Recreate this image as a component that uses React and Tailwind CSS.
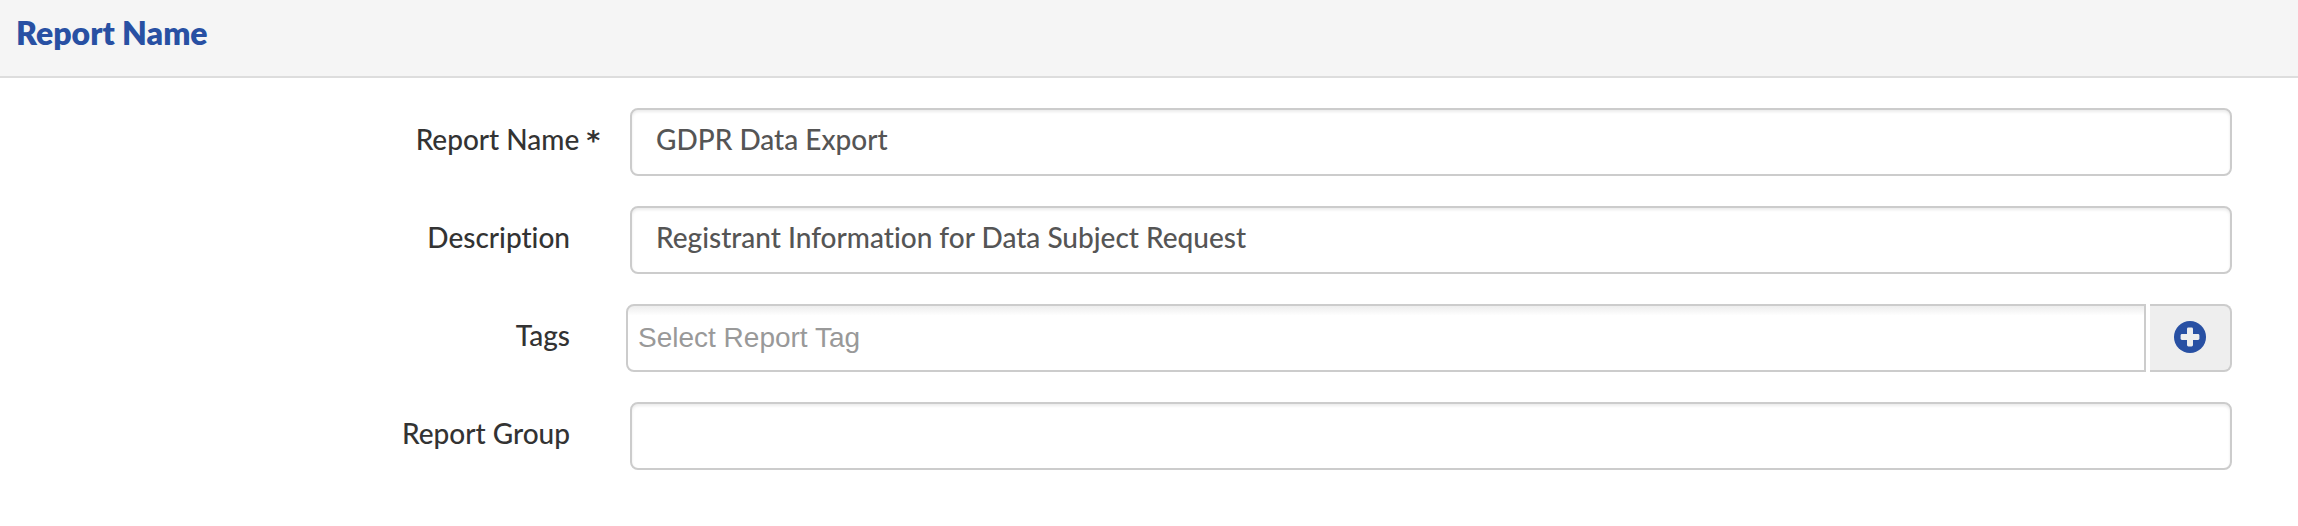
import { useState } from 'react';

const labelStyle = 'w-[600px] shrink-0 pb-1.5 text-right text-[28px] leading-[34px] font-medium text-[#333333]';
const inputStyle =
  'h-[68px] min-w-0 flex-1 rounded-lg border-2 border-[#cccccc] bg-white px-6 pb-1.5 text-[28px] font-medium text-[#555555] shadow-[inset_0_2px_3px_rgba(0,0,0,0.08)] outline-none focus:border-[#2850a3]';

const PlusIcon = () => (
  <svg viewBox="0 0 32 32" className="h-8 w-8" aria-hidden="true">
    <circle cx="16" cy="16" r="16" fill="#2850a3" />
    <rect x="6.6" y="13" width="18.8" height="6" rx="1.4" fill="#eeeeee" />
    <rect x="13" y="6.6" width="6" height="18.8" rx="1.4" fill="#eeeeee" />
  </svg>
);

const FormRow = ({ id, label, required, children }) => (
  <div className="flex items-center">
    <label htmlFor={id} className={required ? labelStyle : `${labelStyle} pr-[30px]`}>
      {label}
      {required && (
        <>
          {' '}
          <span className="font-['DejaVu_Sans',sans-serif] text-[26px] leading-none font-bold">*</span>
        </>
      )}
    </label>
    {children}
  </div>
);

const App = () => {
  const [form, setForm] = useState({
    name: 'GDPR Data Export',
    description: 'Registrant Information for Data Subject Request',
    tags: '',
    group: '',
  });

  const handleChange = (e) => {
    const { name, value } = e.target;
    setForm((prev) => ({ ...prev, [name]: value }));
  };

  return (
    <div className="bg-white font-[Lato,sans-serif] [font-variant-ligatures:none]">
      <header className="border-b-2 border-[#dddddd] bg-[#f5f5f5] px-4 pt-[13px] pb-[23px]">
        <h1 className="text-[32px] leading-[40px] font-extrabold text-[#2850a3]">Report Name</h1>
      </header>

      <form onSubmit={(e) => e.preventDefault()} className="space-y-[30px] pt-[30px] pr-[66px] pb-14">
        <FormRow id="name" label="Report Name" required>
          <input
            id="name"
            type="text"
            name="name"
            value={form.name}
            onChange={handleChange}
            required
            className={`${inputStyle} ml-[30px]`}
          />
        </FormRow>

        <FormRow id="description" label="Description">
          <input
            id="description"
            type="text"
            name="description"
            value={form.description}
            onChange={handleChange}
            className={`${inputStyle} ml-[30px]`}
          />
        </FormRow>

        <FormRow id="tags" label="Tags">
          <div className="ml-[26px] flex min-w-0 flex-1 gap-1">
            <input
              id="tags"
              type="text"
              name="tags"
              value={form.tags}
              onChange={handleChange}
              placeholder="Select Report Tag"
              className="h-[68px] min-w-0 flex-1 rounded-l-lg border-2 border-[#cccccc] bg-[linear-gradient(#eeeeee_1%,#ffffff_15%)] px-[10px] font-['Liberation_Sans',sans-serif] text-[28px] text-[#555555] outline-none placeholder:text-[#999999]"
            />
            <button
              type="button"
              aria-label="Add tag"
              className="flex h-[68px] w-[82px] items-center justify-center rounded-r-lg border-y-2 border-r-2 border-[#cccccc] bg-[#eeeeee] pb-0.5"
            >
              <PlusIcon />
            </button>
          </div>
        </FormRow>

        <FormRow id="group" label="Report Group">
          <input
            id="group"
            type="text"
            name="group"
            value={form.group}
            onChange={handleChange}
            className={`${inputStyle} ml-[30px]`}
          />
        </FormRow>
      </form>
    </div>
  );
};

export default App;
